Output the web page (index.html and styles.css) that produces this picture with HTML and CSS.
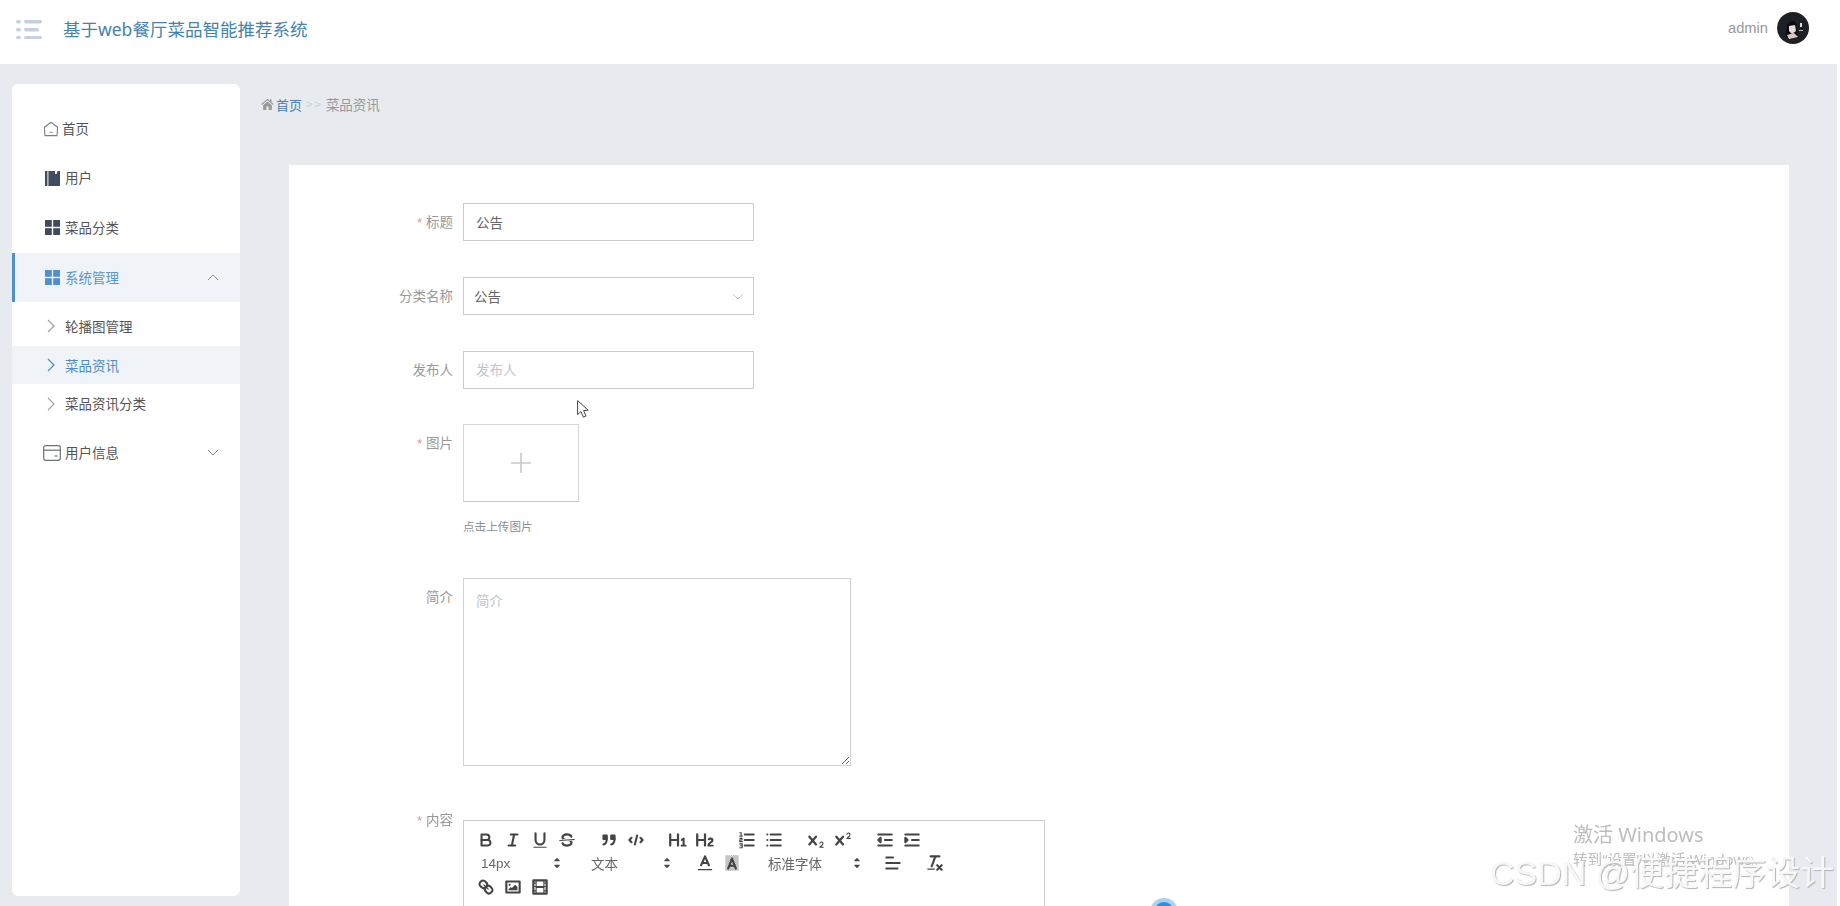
FILE: index.html
```html
<!DOCTYPE html>
<html lang="zh-CN">
<head>
<meta charset="utf-8">
<title>基于web餐厅菜品智能推荐系统</title>
<link rel="stylesheet" href="styles.css">
</head>
<body>
<div class="app">
  <header class="topbar">
    <svg class="burger" viewBox="0 0 26 20" width="26" height="20"><g fill="#c6d0e0"><rect x="0" y="1" width="5" height="3.4" rx="1.7"/><rect x="8" y="1" width="18" height="3.4" rx="1.7"/><rect x="0" y="9" width="5" height="3.4" rx="1.7"/><rect x="8" y="9" width="15" height="3.4" rx="1.7"/><rect x="0" y="17" width="5" height="3" rx="1.5"/><rect x="8" y="17" width="18" height="3" rx="1.5"/></g></svg>
    <div class="brand">基于web餐厅菜品智能推荐系统</div>
    <div class="user">
      <span class="user-name">admin</span>
      <svg class="avatar" viewBox="0 0 32 32" width="32" height="32"><circle cx="16" cy="16" r="16" fill="#1d2024"/><path d="M9 25c0-9 1-15 6-16 5 0 6 6 5 16z" fill="#0c0c10"/><path d="M12 14l6-1 1 6-4 3-3-3z" fill="#e9dcd8"/><path d="M10 23l7-2 4 4-9 2z" fill="#d8c8c8"/><rect x="23" y="11" width="2" height="4" fill="#ddd"/><rect x="22" y="18" width="4" height="1" fill="#bbb"/></svg>
    </div>
  </header>
  <div class="layout">
    <aside class="sidebar">
      <a class="nav-item">
        <svg class="nav-ico home" viewBox="0 0 16 16" width="16" height="16"><path d="M8 1.2L14.6 6.2 14 14.6H2L1.4 6.2z" fill="none" stroke="#778088" stroke-width="1.1" stroke-linejoin="round"/><path d="M6.5 11.2h3" stroke="#778088" stroke-width="1.1"/></svg>
        <span class="nav-text">首页</span>
      </a>
      <a class="nav-item">
        <svg class="nav-ico" viewBox="0 0 15 15" width="15" height="15"><g fill="#3f4d60"><rect x="0" y="0" width="2.4" height="15"/><path d="M3.4 0H10v3h1.6L12.6 0H15v15H3.4z"/></g></svg>
        <span class="nav-text">用户</span>
      </a>
      <a class="nav-item">
        <svg class="nav-ico" viewBox="0 0 15 15" width="15" height="15"><g fill="#3f4a5c"><rect width="6.8" height="6.8"/><rect x="8.2" width="6.8" height="6.8"/><rect y="8.2" width="6.8" height="6.8"/><rect x="8.2" y="8.2" width="6.8" height="6.8"/></g></svg>
        <span class="nav-text">菜品分类</span>
      </a>
      <a class="nav-item active">
        <svg class="nav-ico" viewBox="0 0 15 15" width="15" height="15"><g fill="#4f90c9"><rect width="6.8" height="6.8"/><rect x="8.2" width="6.8" height="6.8"/><rect y="8.2" width="6.8" height="6.8"/><rect x="8.2" y="8.2" width="6.8" height="6.8"/></g></svg>
        <span class="nav-text">系统管理</span>
        <svg class="caret" viewBox="0 0 12 8" width="12" height="8"><path d="M1 7l5-5 5 5" fill="none" stroke="#7f97ad" stroke-width="1"/></svg>
      </a>
      <div class="sub-list">
        <a class="sub-item"><svg class="sub-ico" viewBox="0 0 8 14" width="8" height="14"><path d="M1 1l6 6-6 6" fill="none" stroke="#9aa3ad" stroke-width="1.2"/></svg><span>轮播图管理</span></a>
        <a class="sub-item current"><svg class="sub-ico" viewBox="0 0 8 14" width="8" height="14"><path d="M1 1l6 6-6 6" fill="none" stroke="#4f8cc0" stroke-width="1.2"/></svg><span>菜品资讯</span></a>
        <a class="sub-item"><svg class="sub-ico" viewBox="0 0 8 14" width="8" height="14"><path d="M1 1l6 6-6 6" fill="none" stroke="#9aa3ad" stroke-width="1.2"/></svg><span>菜品资讯分类</span></a>
      </div>
      <a class="nav-item">
        <svg class="nav-ico wallet" viewBox="0 0 18 16" width="18" height="16"><rect x=".7" y=".7" width="16.6" height="14.6" rx="2" fill="none" stroke="#6a7278" stroke-width="1.2"/><path d="M.7 5.2h16.6" stroke="#6a7278" stroke-width="1.2"/><path d="M11.5 11h3" stroke="#6a7278" stroke-width="1.2"/></svg>
        <span class="nav-text">用户信息</span>
        <svg class="caret" viewBox="0 0 12 8" width="12" height="8"><path d="M1 1l5 5 5-5" fill="none" stroke="#7f8a95" stroke-width="1"/></svg>
      </a>
    </aside>
    <main class="main">
      <nav class="crumbs">
        <svg class="crumb-home" viewBox="0 0 12 11" width="13" height="12"><path d="M6 .6L.2 5.6l.7.8L6 2.1l5.1 4.3.7-.8-2.1-1.8V1H8.2v1.5zM2 6.6V11h3V7.8h2V11h3V6.6L6 3.2z" fill="#999"/></svg>
        <span class="crumb-link">首页</span>
        <span class="crumb-sep">&gt;&gt;</span>
        <span class="crumb-now">菜品资讯</span>
      </nav>
      <section class="card">
        <form class="form">
          <div class="row r36">
            <label class="label"><i class="star">*</i> 标题</label>
            <input class="field" type="text" value="公告">
          </div>
          <div class="row r36">
            <label class="label">分类名称</label>
            <div class="field select"><span>公告</span><svg viewBox="0 0 12 7" width="12" height="7"><path d="M1 1l5 5 5-5" fill="none" stroke="#c0c4cc" stroke-width="1"/></svg></div>
          </div>
          <div class="row r35">
            <label class="label">发布人</label>
            <input class="field" type="text" placeholder="发布人">
          </div>
          <div class="row r43">
            <label class="label"><i class="star">*</i> 图片</label>
            <div class="upload-col">
              <div class="upload"><svg viewBox="0 0 20 20" width="20" height="20"><path d="M10 0v20M0 10h20" stroke="#c6c8cc" stroke-width="1.6"/></svg></div>
              <div class="hint">点击上传图片</div>
            </div>
          </div>
          <div class="row r36b">
            <label class="label">简介</label>
            <textarea class="area" placeholder="简介"></textarea>
          </div>
          <div class="row">
            <label class="label label-editor"><i class="star">*</i> 内容</label>
            <div class="editor">
              <div class="tool-row">
                <div class="group">
                  <span class="btn"><svg viewBox="0 0 18 18"><path class="s" d="M5,4H9.5A2.5,2.5,0,0,1,12,6.5v0A2.5,2.5,0,0,1,9.5,9H5V4Z"/><path class="s" d="M5,9h5.5A2.5,2.5,0,0,1,13,11.5v0A2.5,2.5,0,0,1,10.5,14H5V9Z"/></svg></span>
                  <span class="btn"><svg viewBox="0 0 18 18"><path class="s" d="M7 4h6M5 14h6M8 14l2-10"/></svg></span>
                  <span class="btn"><svg viewBox="0 0 18 18"><path class="s" d="M5,3V9a4.012,4.012,0,0,0,4,4H9a4.012,4.012,0,0,0,4-4V3"/><rect class="f" height="1" rx=".5" width="12" x="3" y="15"/></svg></span>
                  <span class="btn"><svg viewBox="0 0 18 18"><path class="t" d="M15.5 8.5L2.5 9.5"/><path class="f" d="M9.007,8C6.542,7.791,6,7.519,6,6.5,6,5.792,7.283,5,9,5c1.571,0,2.765.679,2.969,1.309a1,1,0,0,0,1.9-.617C13.356,4.106,11.354,3,9,3,6.2,3,4,4.538,4,6.5a3.2,3.2,0,0,0,.5,1.843Z"/><path class="f" d="M8.984,10C11.457,10.208,12,10.479,12,11.5c0,.708-1.283,1.5-3,1.5-1.571,0-2.765-.679-2.969-1.309a1,1,0,1,0-1.9.617C4.644,13.894,6.646,15,9,15c2.8,0,5-1.538,5-3.5a3.2,3.2,0,0,0-.5-1.843Z"/></svg></span>
                </div>
                <div class="group">
                  <span class="btn"><svg viewBox="0 0 18 18"><rect class="sf" height="3" width="3" x="4" y="5"/><rect class="sf" height="3" width="3" x="11" y="5"/><path class="s" d="M7,8c0,4.031-3,5-3,5"/><path class="s" d="M14,8c0,4.031-3,5-3,5"/></svg></span>
                  <span class="btn"><svg viewBox="0 0 18 18"><path class="s" d="M5 7L3 9l2 2M13 7l2 2-2 2M10 5L8 13"/></svg></span>
                </div>
                <div class="group">
                  <span class="btn"><svg viewBox="0 0 18 18"><path class="f" d="M10,4V14a1,1,0,0,1-2,0V10H3v4a1,1,0,0,1-2,0V4A1,1,0,0,1,3,4V8H8V4a1,1,0,0,1,2,0Zm6.06787,9.209H14.98975V7.59863a.54085.54085,0,0,0-.605-.60547h-.62744a1.01119,1.01119,0,0,0-.748.29688L11.645,8.56641a.5435.5435,0,0,0-.022.8584l.28613.30762a.53861.53861,0,0,0,.84717.0332l.09912-.08789a1.2137,1.2137,0,0,0,.2417-.35254h.02246s-.01123.30859-.01123.60547V13.209H12.041a.54085.54085,0,0,0-.605.60547v.43945a.54085.54085,0,0,0,.605.60547h4.02686a.54085.54085,0,0,0,.605-.60547v-.43945A.54085.54085,0,0,0,16.06787,13.209Z"/></svg></span>
                  <span class="btn"><svg viewBox="0 0 18 18"><path class="f" d="M16.73975,13.81445v.43945a.54085.54085,0,0,1-.605.60547H11.855a.58392.58392,0,0,1-.64893-.60547V14.0127c0-2.90527,3.39941-3.42187,3.39941-4.55469a.77675.77675,0,0,0-.84717-.78125,1.17684,1.17684,0,0,0-.83594.38477c-.2749.26367-.561.374-.85791.13184l-.4292-.34082c-.30811-.24219-.38525-.51758-.1543-.81445a2.97155,2.97155,0,0,1,2.45361-1.17676,2.45393,2.45393,0,0,1,2.68408,2.40918c0,2.45312-3.1792,2.92676-3.27832,3.93848h2.79443A.54085.54085,0,0,1,16.73975,13.81445ZM9,3A.99974.99974,0,0,0,8,4V8H3V4A1,1,0,0,0,1,4V14a1,1,0,0,0,2,0V10H8v4a1,1,0,0,0,2,0V4A.99974.99974,0,0,0,9,3Z"/></svg></span>
                </div>
                <div class="group">
                  <span class="btn"><svg viewBox="0 0 18 18"><path class="s" d="M7 4h8M7 9h8M7 14h8"/><path class="t" d="M2.5 2.5h1.2v3M2.5 5.5h2.2M2.5 7.5h2v1.5h-2v1.5h2.2M2.5 12.5h2.2v3.5H2.5M3 14.2h1.6"/></svg></span>
                  <span class="btn"><svg viewBox="0 0 18 18"><path class="s" d="M6 4h9M6 9h9M6 14h9M3 4h0M3 9h0M3 14h0"/></svg></span>
                </div>
                <div class="group">
                  <span class="btn"><svg viewBox="0 0 18 18"><path class="f" d="M15.5,15H13.861a3.858,3.858,0,0,0,1.914-2.975,1.8,1.8,0,0,0-1.6-1.751A1.921,1.921,0,0,0,12.021,11.7a0.50013,0.50013,0,1,0,.957.291h0a0.914,0.914,0,0,1,1.053-.725,0.81,0.81,0,0,1,.744.762c0,1.076-1.16971,1.86982-1.93971,2.43082A1.45639,1.45639,0,0,0,12,15.5a0.5,0.5,0,0,0,.5.5h3A0.5,0.5,0,0,0,15.5,15Z"/><path class="f" d="M9.65,5.241a1,1,0,0,0-1.409.108L6,7.964,3.759,5.349A1,1,0,0,0,2.192,6.59178Q2.2,6.6,2.241,6.651L4.684,9.5,2.241,12.35A1,1,0,0,0,3.71,13.70722q0.04-.04.049-0.05L6,11.036,8.241,13.65a1,1,0,1,0,1.567-1.24277Q9.8,12.4,9.759,12.35L7.316,9.5,9.759,6.651A1,1,0,0,0,9.65,5.241Z"/></svg></span>
                  <span class="btn"><svg viewBox="0 0 18 18"><path class="f" d="M15.5,7H13.861a4.015,4.015,0,0,0,1.914-2.975,1.8,1.8,0,0,0-1.6-1.751A1.922,1.922,0,0,0,12.021,3.7a0.5,0.5,0,1,0,.957.291,0.917,0.917,0,0,1,1.053-.725,0.81,0.81,0,0,1,.744.762c0,1.077-1.164,1.925-1.934,2.486A1.423,1.423,0,0,0,12,7.5a0.5,0.5,0,0,0,.5.5h3A0.5,0.5,0,0,0,15.5,7Z"/><path class="f" d="M9.651,5.241a1,1,0,0,0-1.41.108L6,7.964,3.759,5.349a1,1,0,1,0-1.519,1.3L4.683,9.5,2.241,12.35a1,1,0,1,0,1.519,1.3L6,11.036l2.241,2.616a1,1,0,0,0,1.519-1.3L7.317,9.5,9.759,6.651A1,1,0,0,0,9.651,5.241Z"/></svg></span>
                </div>
                <div class="group">
                  <span class="btn"><svg viewBox="0 0 18 18"><path class="s" d="M3 14h12M3 4h12M9 9h6"/><polygon class="sf" points="5 7 5 11 3 9 5 7"/></svg></span>
                  <span class="btn"><svg viewBox="0 0 18 18"><path class="s" d="M3 14h12M3 4h12M9 9h6"/><polygon class="sf" points="3 7 3 11 5 9 3 7"/></svg></span>
                </div>
              </div>
              <div class="tool-row row2">
                <span class="picker p-size">14px<svg viewBox="0 0 18 18"><polygon class="sf" points="7 11 9 13 11 11 7 11"/><polygon class="sf" points="7 7 9 5 11 7 7 7"/></svg></span>
                <span class="picker p-head">文本<svg viewBox="0 0 18 18"><polygon class="sf" points="7 11 9 13 11 11 7 11"/><polygon class="sf" points="7 7 9 5 11 7 7 7"/></svg></span>
                <span class="btn"><svg viewBox="0 0 18 18"><path class="t" d="M3 15h12"/><path class="s" d="M5.5 11L9 3l3.5 8M11.63 9H6.38"/></svg></span>
                <span class="btn"><svg viewBox="0 0 18 18"><defs><pattern id="dots" width="2" height="2" patternUnits="userSpaceOnUse"><rect width="1" height="1" fill="#888"/><rect x="1" y="1" width="1" height="1" fill="#888"/></pattern></defs><rect x="3" y="2" width="12" height="14" fill="url(#dots)"/><path class="s" d="M5.5 14L9 5l3.5 9M11.4 11.5H6.6"/></svg></span>
                <span class="picker p-font">标准字体<svg viewBox="0 0 18 18"><polygon class="sf" points="7 11 9 13 11 11 7 11"/><polygon class="sf" points="7 7 9 5 11 7 7 7"/></svg></span>
                <span class="btn btn-align"><svg viewBox="0 0 18 18"><path class="s" d="M3 9h12M3 14h10M3 4h6"/></svg></span>
                <span class="btn btn-clean"><svg viewBox="0 0 18 18"><path class="s" d="M5 3h8M6 12L9.35 3M11 11l4 4M15 11l-4 4"/><rect class="f" height="1" rx=".5" width="7" x="2" y="14"/></svg></span>
              </div>
              <div class="tool-row row3">
                <span class="btn"><svg viewBox="0 0 18 18"><path class="t" d="M7 7l4 4"/><path class="s" d="M8.9,4.577a3.476,3.476,0,0,1,.36,4.679A3.476,3.476,0,0,1,4.577,8.9C3.185,7.5,2.035,6.4,4.217,4.217S7.5,3.185,8.9,4.577Z"/><path class="s" d="M13.423,9.1a3.476,3.476,0,0,0-4.679-.36,3.476,3.476,0,0,0,.36,4.679c1.392,1.392,2.5,2.542,4.679.36S14.815,10.5,13.423,9.1Z"/></svg></span>
                <span class="btn"><svg viewBox="0 0 18 18"><rect class="s" height="10" width="12" x="3" y="4"/><circle class="f" cx="6" cy="7" r="1"/><polygon class="f" points="5 12 5 11 7 9 8 10 11 7 13 9 13 12 5 12"/></svg></span>
                <span class="btn"><svg viewBox="0 0 18 18"><rect class="s" height="12" width="12" x="3" y="3"/><path class="f" d="M5 3h1v12H5zM12 3h1v12h-1zM5 8h8v2H5zM3 5h3v1H3zM3 8h3v1H3zM3 12h3v1H3zM12 5h3v1h-3zM12 8h3v1h-3zM12 12h3v1h-3z"/></svg></span>
              </div>
            </div>
          </div>
        </form>
      </section>
    </main>
  </div>
</div>
<svg class="cursor" viewBox="0 0 12 18" width="12" height="18"><path d="M.6.6v14l3.4-3 2.4 5.6 2.6-1.2-2.4-5.4 4.6-.4z" fill="#fff" stroke="#444" stroke-width="1"/></svg>
<div class="blob"></div>
<div class="win-mark"><div class="win-title">激活 Windows</div><div class="win-sub">转到“设置”以激活 Windows。</div></div>
<div class="csdn">CSDN @便捷程序设计</div>
</body>
</html>
```
FILE: styles.css
```css
* { box-sizing: border-box; }
html, body { margin: 0; padding: 0; height: 100%; }
body {
  width: 1840px;
  height: 906px;
  overflow: hidden;
  position: relative;
  background: #fff;
  font-family: "Liberation Sans", "Noto Sans CJK SC", sans-serif;
  font-size: 13.5px;
  color: #666;
}
.app { width: 1837px; height: 906px; background: #e7eaef; display: flex; flex-direction: column; filter: blur(.4px); }

.topbar { height: 64px; flex: none; background: #fff; display: flex; align-items: center; padding: 0 28px 8px 16px; }
.burger { flex: none; margin-top: 2px; }
.brand { margin-left: 21px; font-family: "Noto Sans", "Noto Sans CJK SC", sans-serif; font-size: 17.5px; color: #4583ab; white-space: nowrap; }
.user { margin-left: auto; display: flex; align-items: center; gap: 9px; }
.user-name { font-family: "Liberation Sans", sans-serif; font-size: 14.7px; color: #999; }
.avatar { display: block; }

.layout { flex: 1; display: flex; min-height: 0; padding-left: 12px; }
.sidebar { flex: none; width: 228px; height: 812px; margin-top: 20px; padding-top: 20px; background: #fff; border-radius: 6px; overflow: hidden; }
.nav-item { height: 49.5px; display: flex; align-items: center; padding-left: 33px; padding-right: 21px; color: #555; }
.nav-ico { flex: none; margin-right: 5px; }
.nav-ico.home { margin-left: -2px; margin-right: 3px; }
.nav-ico.wallet { margin-left: -2px; margin-right: 4px; }
.nav-text { white-space: nowrap; margin-bottom: 2px; }
.caret { margin-left: auto; flex: none; }
.nav-item.active { background: #f0f4f8; border-left: 3px solid #4f90c9; padding-left: 30px; color: #5d96c6; }
.nav-item.active .nav-text { margin-bottom: 0; }
.sub-list { padding: 5px 0; }
.sub-item { height: 38.7px; display: flex; align-items: center; padding-left: 35px; color: #555; }
.sub-item span { margin-left: 10px; margin-bottom: 1px; }
.sub-item.current { background: #f0f4f8; color: #4f8cc0; }
.sub-ico { flex: none; }

.main { flex: 1; min-width: 0; padding: 30px 0 0 21px; }
.crumbs { height: 20px; display: flex; align-items: center; margin-bottom: 51px; color: #999; }
.crumb-home { margin-right: 2px; }
.crumb-link { color: #4a80ad; font-size: 13px; }
.crumb-sep { margin: 0 3px 0 4px; color: #c8ccd2; font-size: 11px; letter-spacing: 2px; }
.card { width: 1500px; margin-left: 28px; height: 800px; background: #fff; }
.form { padding-top: 38px; }
.row { display: flex; align-items: flex-start; }
.r36 { margin-bottom: 36px; }
.r35 { margin-bottom: 35px; }
.r43 { margin-bottom: 43px; }
.r36b { margin-bottom: 36px; }
.label { flex: none; width: 164px; height: 38px; line-height: 40px; text-align: right; color: #999; margin-right: 10px; }
.label-editor { line-height: 38px; }
.star { font-style: normal; color: #e98f8f; }
.field { flex: none; width: 291px; height: 38px; border: 1px solid #cbcbcb; background: #fff; padding: 0 12px; font: inherit; color: #666; outline: none; }
.field::placeholder, .area::placeholder { color: #c0c4cc; opacity: 1; }
.select { display: flex; align-items: center; justify-content: space-between; padding: 0 9px 0 10px; }
.upload-col { flex: none; }
.upload { width: 116px; height: 78px; border: 1px solid #d6d6d6; border-bottom-color: #c8c8c8; display: flex; align-items: center; justify-content: center; }
.upload svg { margin-top: -1px; }
.hint { margin-top: 17px; height: 16px; line-height: 16px; font-size: 11.6px; color: #8a8f98; white-space: nowrap; }
.area { flex: none; display: block; width: 388px; height: 188px; border: 1px solid #d2d2d2; padding: 13px 12px; font: inherit; line-height: 20px; color: #666; outline: none; }
.editor { flex: none; width: 582px; height: 200px; margin-top: 18px; border: 1px solid #ccc; padding: 7px 0 0 8px; }
.tool-row { display: flex; align-items: center; height: 23.5px; }
.group { display: flex; margin-right: 15px; }
.btn { flex: none; width: 27px; height: 22px; display: flex; align-items: center; justify-content: center; }
.btn svg { width: 20px; height: 20px; display: block; }
.s { fill: none; stroke: #444; stroke-width: 1.9; stroke-linecap: round; stroke-linejoin: round; }
.t { fill: none; stroke: #444; stroke-width: 1; stroke-linecap: round; }
.f { fill: #444; }
.sf { fill: #444; stroke: #444; stroke-width: 1.9; stroke-linejoin: round; }
.picker { flex: none; display: flex; align-items: center; justify-content: space-between; height: 22px; padding: 0 3px 0 9px; color: #666; font-size: 13.5px; white-space: nowrap; }
.picker svg { width: 20px; height: 20px; flex: none; }
.picker .sf { stroke-width: 1; }
.p-size { width: 98px; margin-right: 12px; }
.p-head { width: 98px; margin-right: 11px; }
.p-font { width: 108px; margin: 0 12px 0 14px; padding-right: 0; }
.btn-clean { margin-left: 15px; }

.cursor { position: absolute; left: 577px; top: 400px; }
.blob { position: absolute; left: 1154px; top: 902px; width: 20px; height: 20px; border-radius: 50%; background: #2b8fe8; box-shadow: 0 0 0 4px #a6d4f7; }
.win-mark { position: absolute; left: 1573px; top: 821px; color: #bdbdbd; font-family: "Noto Sans", "Noto Sans CJK SC", sans-serif; white-space: nowrap; }
.win-title { font-size: 20px; line-height: 28px; }
.win-sub { font-size: 14.6px; line-height: 18px; margin-top: 1px; }
.csdn { position: absolute; left: 1490px; top: 853px; font-size: 34px; line-height: 40px; white-space: nowrap; color: #f7f7f7; text-shadow: 1px 1px 1px #b4b4b4; }
```
